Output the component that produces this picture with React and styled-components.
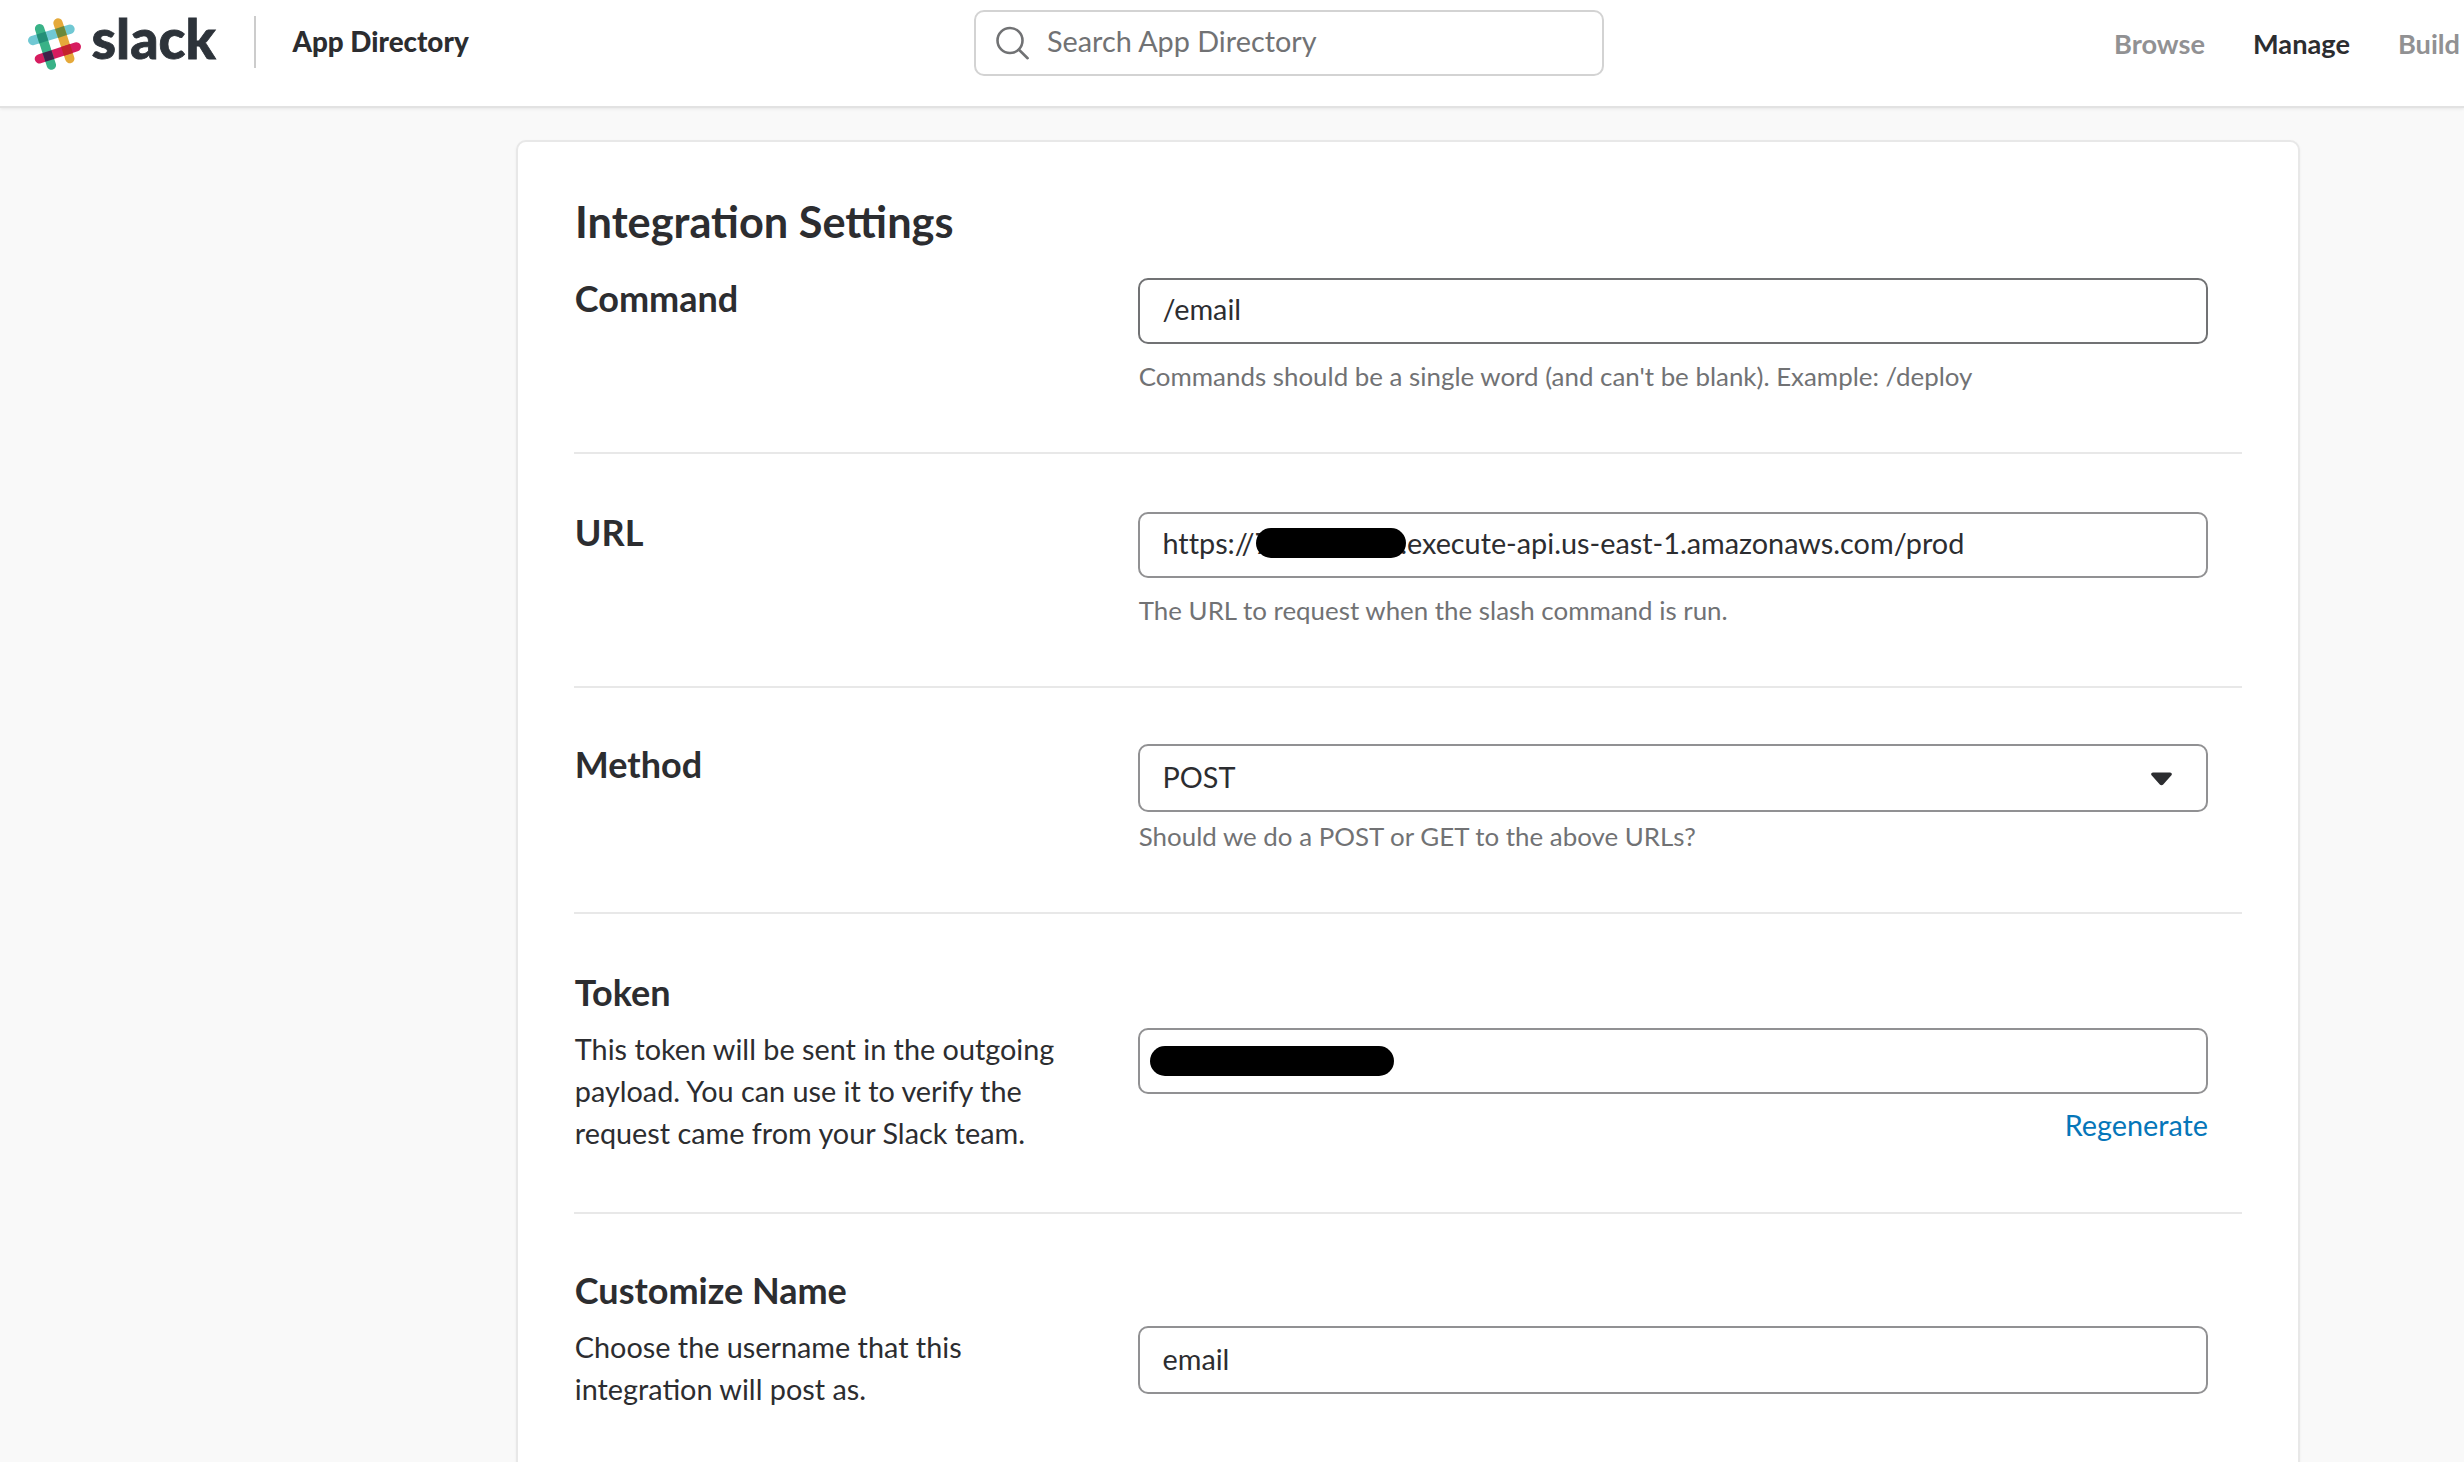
import React from "react";
import styled, { createGlobalStyle } from "styled-components";

const ink = "#2c2d30";
const muted = "#717274";
const soft = "#919193";
const line = "#e8e8e8";

const GlobalStyle = createGlobalStyle`
  * { box-sizing: border-box; }
  body {
    margin: 0;
    background: #f9f9f9;
    color: ${ink};
    font-family: Lato, "Open Sans", sans-serif;
    font-size: 28.8px;
    -webkit-font-smoothing: antialiased;
  }
`;

const Page = styled.div`
  display: flex;
  flex-direction: column;
  height: 1462px;
  overflow: hidden;
`;

const Header = styled.header`
  display: grid;
  grid-template-columns: 946px 630px 1fr;
  flex: none;
  height: 108px;
  padding: 10px 4px 0 28px;
  background: #fff;
  border-bottom: 2px solid #e2e2e2;
  box-shadow: 0 1px 3px rgba(0, 0, 0, 0.08);
`;

const Brand = styled.div`
  display: flex;
  align-items: center;
  height: 66px;
`;

const LogoMark = styled.svg`
  flex: none;
  width: 53px;
  height: 52px;
  margin-top: 2px;
`;

const Wordmark = styled.span`
  width: 163px;
  margin: 0 0 11px 10.5px;
  color: #2d333a;
  font-size: 55.5px;
  font-weight: 900;
  line-height: 60px;
  -webkit-text-stroke: 0.8px #2d333a;
`;

const Separator = styled.span`
  flex: none;
  width: 2px;
  height: 52px;
  margin: 0 36.5px 2px -0.5px;
  background: #ccc;
`;

const BrandLabel = styled.span`
  padding-bottom: 2px;
  font-size: 27.8px;
  font-weight: 900;
  line-height: 40px;
`;

const SearchBox = styled.div`
  display: flex;
  align-items: center;
  gap: 17px;
  height: 66px;
  padding-left: 20px;
  border: 2px solid #d3d3d3;
  border-radius: 10px;
  color: ${muted};
`;

const SearchIcon = styled.svg`
  width: 34px;
  height: 34px;
`;

const SearchText = styled.span`
  padding-bottom: 4px;
  line-height: 40px;
`;

const Nav = styled.nav`
  display: flex;
  align-items: center;
  justify-content: flex-end;
  gap: 48px;
  height: 66px;
  padding-top: 2px;
`;

const NavLink = styled.a`
  color: ${(p) => (p.$active ? ink : soft)};
  font-size: 27.2px;
  font-weight: 700;
  line-height: 40px;
`;

const Card = styled.main`
  flex: none;
  width: 1784px;
  height: 1400px;
  margin: 32px 0 0 516px;
  padding: 52px 56px 0;
  background: #fff;
  border: 2px solid ${line};
  border-radius: 10px;
  box-shadow: 0 1px 3px rgba(0, 0, 0, 0.05);
`;

const Heading = styled.h2`
  margin: 0 0 30px;
  padding-left: 1px;
  font-size: 43.3px;
  font-weight: 700;
  line-height: 54px;
`;

const Row = styled.section`
  display: grid;
  grid-template-columns: 564px 1070px;
  padding: ${(p) => p.$top}px 0 ${(p) => p.$bottom ?? 56}px;
  border-bottom: ${(p) => (p.$last ? "none" : `2px solid ${line}`)};
`;

const Label = styled.div`
  width: 500px;
  padding-left: 0.8px;
`;

const Title = styled.h3`
  margin: 0;
  font-size: 36px;
  font-weight: 700;
  line-height: 40px;
`;

const Description = styled.p`
  margin: 16px 0 0;
  line-height: 42px;
`;

const Control = styled.div`
  display: flex;
  flex-direction: column;
  padding-top: ${(p) => (p.$lowered ? 56 : 0)}px;
`;

const Field = styled.div`
  position: relative;
  display: flex;
  align-items: center;
  height: ${(p) => (p.$tall ? 68 : 66)}px;
  padding: 0 34px ${(p) => (p.$tall ? 3 : 4)}px 22.5px;
  border: 2px solid ${(p) => (p.$strong ? muted : soft)};
  border-radius: 10px;
  font-variant-ligatures: none;
  white-space: nowrap;
`;

const Masked = styled.span`
  display: flex;
  justify-content: space-between;
  width: 152.5px;
`;

const Redaction = styled.span`
  position: absolute;
  top: ${(p) => p.$top}px;
  left: ${(p) => p.$left}px;
  width: ${(p) => p.$width}px;
  height: 30px;
  border-radius: 15px;
  background: #000;
`;

const Caret = styled.svg`
  width: 21px;
  height: 14px;
  margin: 4px 0 0 auto;
`;

const Hint = styled.p`
  margin: ${(p) => (p.$tight ? 4 : 12)}px 0 0 0.8px;
  color: ${muted};
  font-size: 25.9px;
  line-height: 40px;
`;

const TextLink = styled.a`
  align-self: flex-end;
  margin-top: 10px;
  color: #0576b9;
  line-height: 42px;
`;

function SlackMark() {
  return (
    <LogoMark viewBox="28 18 53 52" fill="none" strokeWidth="9.3">
      <g strokeLinecap="round">
        <path d="M32.7 40.5 70 29.2" stroke="#70c8d3" />
        <path d="M58 23 69.8 58.6" stroke="#e5a93a" />
        <path d="M39.4 58.9 76.3 46.8" stroke="#d61c5f" />
        <path d="M39.6 28.7 51.4 65.2" stroke="#39b287" />
      </g>
      <path d="M41 33.2 43.8 42" stroke="#238f78" />
      <path d="M59.5 27.6 62.5 36.4" stroke="#6b883a" />
      <path d="M47 51.6 49.8 60.4" stroke="#3f2149" />
      <path d="M65.6 45.5 68.4 54.3" stroke="#c4242c" />
    </LogoMark>
  );
}

export default function App() {
  return (
    <>
      <GlobalStyle />
      <Page>
        <Header>
          <Brand>
            <SlackMark />
            <Wordmark>slack</Wordmark>
            <Separator />
            <BrandLabel>App Directory</BrandLabel>
          </Brand>
          <SearchBox>
            <SearchIcon viewBox="0 0 34 34" fill="none" stroke={muted} strokeWidth="2.6" strokeLinecap="round">
              <circle cx="14" cy="14.5" r="12.5" />
              <path d="M23 23.8 31.6 32.2" />
            </SearchIcon>
            <SearchText>Search App Directory</SearchText>
          </SearchBox>
          <Nav>
            <NavLink>Browse</NavLink>
            <NavLink $active>Manage</NavLink>
            <NavLink>Build</NavLink>
          </Nav>
        </Header>

        <Card>
          <Heading>Integration Settings</Heading>

          <Row $top={0}>
            <Label>
              <Title>Command</Title>
            </Label>
            <Control>
              <Field $strong>/email</Field>
              <Hint>Commands should be a single word (and can't be blank). Example: /deploy</Hint>
            </Control>
          </Row>

          <Row $top={58}>
            <Label>
              <Title>URL</Title>
            </Label>
            <Control>
              <Field>
                <span>https://</span>
                <Masked>
                  <span>7</span>
                  <span>.</span>
                </Masked>
                <span>execute-api.us-east-1.amazonaws.com/prod</span>
                <Redaction $top={14} $left={116} $width={150} />
              </Field>
              <Hint>The URL to request when the slash command is run.</Hint>
            </Control>
          </Row>

          <Row $top={56}>
            <Label>
              <Title>Method</Title>
            </Label>
            <Control>
              <Field $tall>
                <span>POST</span>
                <Caret viewBox="0 0 21 14" fill={ink}>
                  <path d="M2 .5h17c1.8 0 2.4 1.9 1.2 3.1l-8 8.9c-.9 1-2.5 1-3.4 0l-8-8.9C-.4 2.4.2.5 2 .5Z" />
                </Caret>
              </Field>
              <Hint $tight>Should we do a POST or GET to the above URLs?</Hint>
            </Control>
          </Row>

          <Row $top={58} $bottom={58}>
            <Label>
              <Title>Token</Title>
              <Description>
                This token will be sent in the outgoing payload. You can use it to verify the request came
                from your Slack team.
              </Description>
            </Label>
            <Control $lowered>
              <Field>
                <Redaction $top={16} $left={10} $width={244} />
              </Field>
              <TextLink>Regenerate</TextLink>
            </Control>
          </Row>

          <Row $top={56} $last>
            <Label>
              <Title>Customize Name</Title>
              <Description>Choose the username that this integration will post as.</Description>
            </Label>
            <Control $lowered>
              <Field $tall>email</Field>
            </Control>
          </Row>
        </Card>
      </Page>
    </>
  );
}
